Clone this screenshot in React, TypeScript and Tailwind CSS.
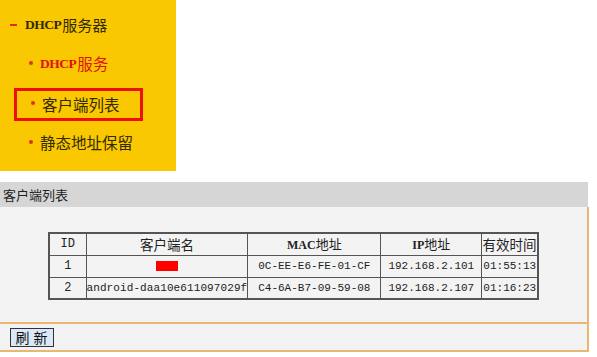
const cjk = '"Noto Sans CJK SC", sans-serif';

const rows = [
  { id: '1', name: null, mac: '0C-EE-E6-FE-01-CF', ip: '192.168.2.101', time: '01:55:13' },
  { id: '2', name: 'android-daa10e611097029f', mac: 'C4-6A-B7-09-59-08', ip: '192.168.2.107', time: '01:16:23' },
];

function Bullet() {
  return <span className="inline-block w-[4px] h-[4px] rounded-full bg-[#e0301a] mr-[7px] mb-[3px]" />;
}

export default function App() {
  return (
    <div className="w-[597px] h-[357px] bg-white" style={{ fontFamily: cjk }}>
      {/* Sidebar menu */}
      <div className="h-[182px]">
        <div className="w-[176px] h-[171px] bg-[#fac800] pt-[14px] text-[#332a00]">
          <div className="flex items-center h-[22px] pl-[10px] text-[15px]">
            <span className="inline-block w-[7px] h-[2px] bg-[#e0301a] mr-[8px]" />
            <span className="font-['Liberation_Serif'] text-[13.5px] font-bold tracking-[-0.5px] mr-[1px]">DHCP</span>
            <span>服务器</span>
          </div>
          <div className="flex items-center h-[22px] pl-[29px] mt-[17px] text-[15.5px] text-[#e01010]">
            <Bullet />
            <span className="font-['Liberation_Serif'] text-[13.5px] font-bold tracking-[-0.5px] mr-[1px]">DHCP</span>
            <span>服务</span>
          </div>
          <div className="ml-[14px] mt-[13px] w-[129px] h-[33px] border-[3px] border-[#ee1010] flex items-center pl-[14px] text-[15.5px]">
            <Bullet />
            <span>客户端列表</span>
          </div>
          <div className="flex items-center h-[22px] pl-[29px] mt-[11px] text-[15.5px]">
            <Bullet />
            <span>静态地址保留</span>
          </div>
        </div>
      </div>

      {/* Panel */}
      <div className="w-[589px]">
        <div className="h-[25px] bg-[#d6d6d6] flex items-center pl-[3px] text-[13px] text-[#222] mr-[1px]">客户端列表</div>
        <div className="bg-[#f3f3f3] border-r-2 border-[#ebb574] pt-[25px] pb-[22px]">
          <table className="ml-[48px] border-collapse border-2 border-[#555] text-[11px] text-[#222]" style={{ fontFamily: '"Liberation Mono", "Noto Sans CJK SC", monospace' }}>
            <thead>
              <tr className="h-[22px]">
                <th className="w-[37px] border border-[#555] font-normal text-[12px]">ID</th>
                <th className="w-[161px] border border-[#555] font-normal text-[13.5px]" style={{ fontFamily: cjk }}>客户端名</th>
                <th className="w-[133px] border border-[#555] font-normal"><span className="font-['Liberation_Serif'] font-bold text-[12px]">MAC</span><span className="text-[13px]" style={{ fontFamily: cjk }}>地址</span></th>
                <th className="w-[101px] border border-[#555] font-normal"><span className="font-['Liberation_Serif'] font-bold text-[12px]">IP</span><span className="text-[13px]" style={{ fontFamily: cjk }}>地址</span></th>
                <th className="w-[56px] border border-[#555] font-normal text-[13.5px] whitespace-nowrap" style={{ fontFamily: cjk }}>有效时间</th>
              </tr>
            </thead>
            <tbody>
              {rows.map((r) => (
                <tr key={r.id} className="h-[22px]">
                  <td className="border border-[#555] text-center text-[12px]">{r.id}</td>
                  <td className="border border-[#555] text-center whitespace-nowrap tracking-[0.1px]">
                    {r.name ?? <span className="inline-block w-[22px] h-[10px] bg-[#ff0000] align-middle" />}
                  </td>
                  <td className="border border-[#555] text-center">{r.mac}</td>
                  <td className="border border-[#555] text-center">{r.ip}</td>
                  <td className="border border-[#555] text-left pl-[1px] whitespace-nowrap">{r.time}</td>
                </tr>
              ))}
            </tbody>
          </table>
        </div>
        <div className="bg-[#f3f3f3] border-y-2 border-r-2 border-[#ebb574] h-[30px] flex items-center pl-[10px]">
          <button className="w-[44px] h-[19px] bg-[#dbe8f7] border border-[#333] text-[14px] leading-none text-[#111] tracking-[4px] pl-[3px]" style={{ fontFamily: cjk }}>刷新</button>
        </div>
      </div>
    </div>
  );
}
